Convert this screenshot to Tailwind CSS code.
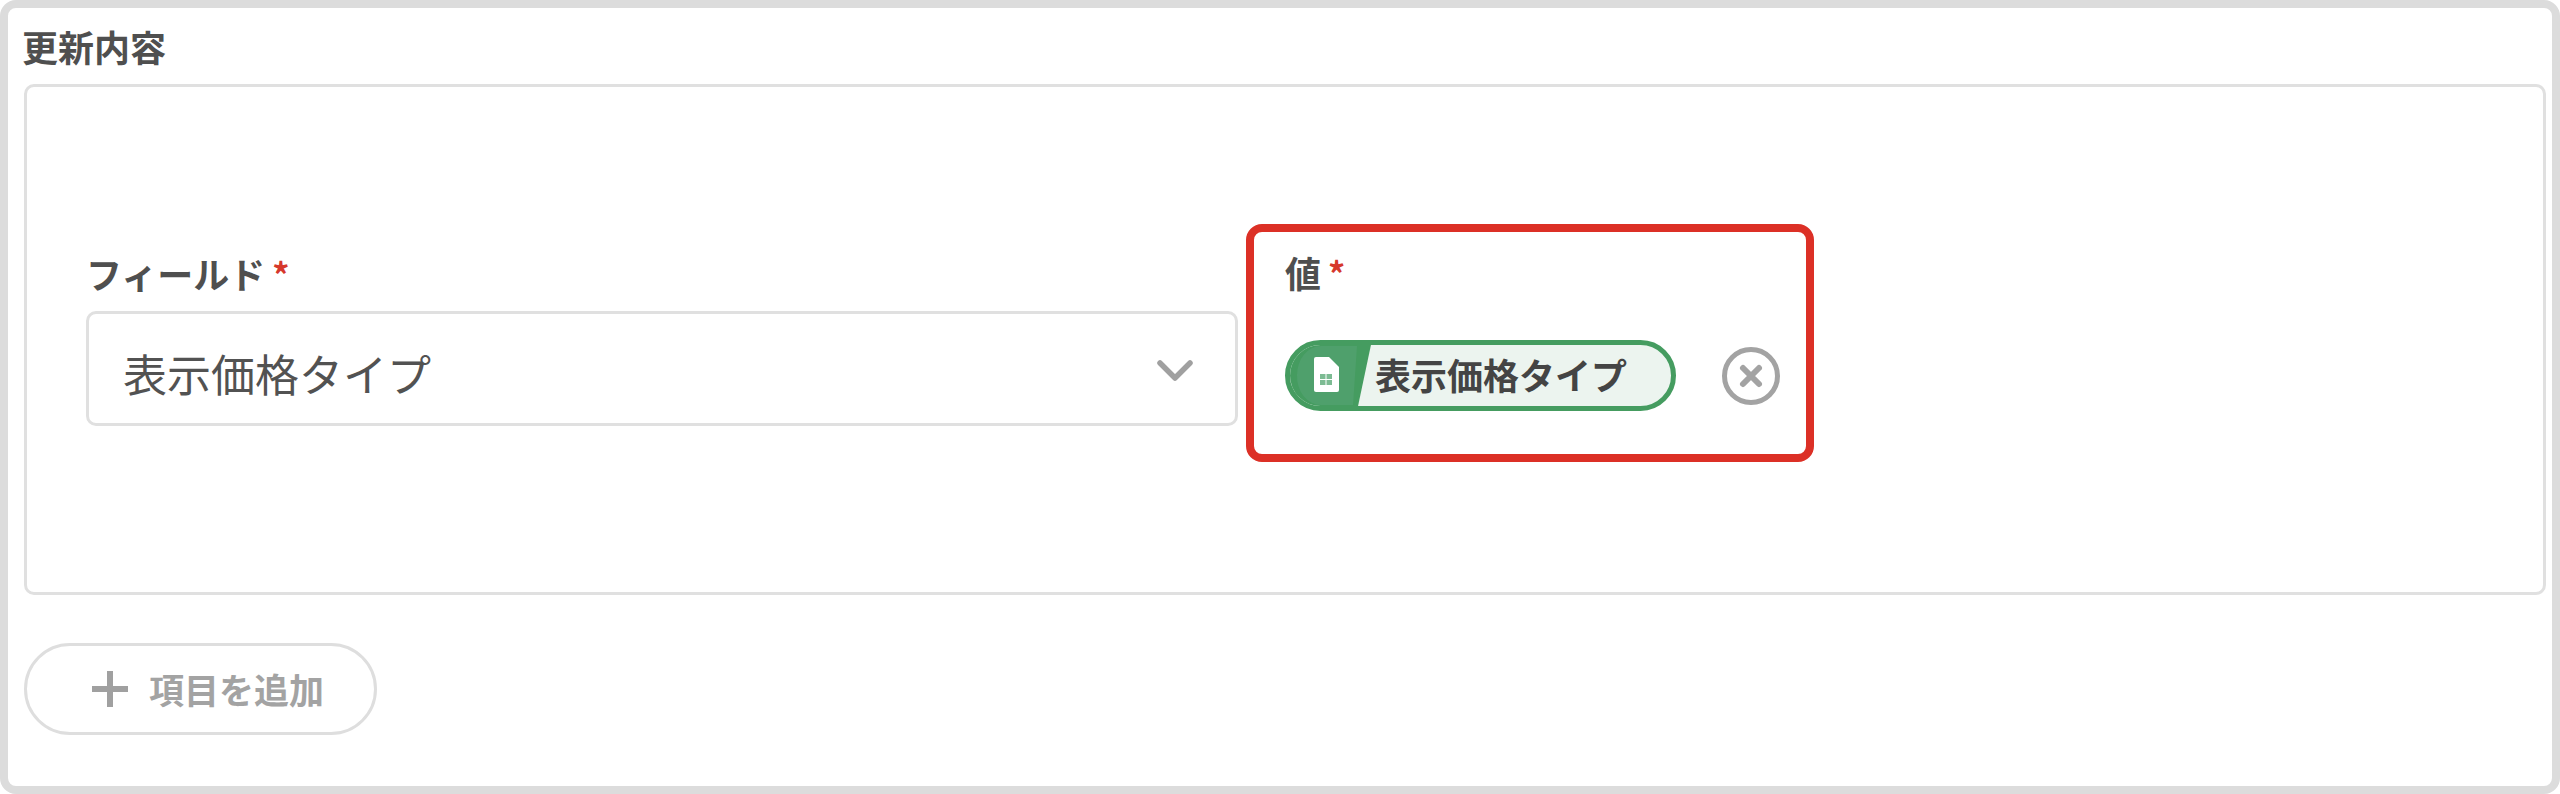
<!DOCTYPE html>
<html lang="ja">
<head>
    <meta charset="UTF-8">
    <title>更新内容</title>
    <script src="https://cdn.jsdelivr.net/npm/@tailwindcss/browser@4"></script>
</head>
<body class="bg-white font-['Noto_Sans_CJK_JP','Noto_Sans',sans-serif] text-[#4f4f4f]">
    <div class="box-border h-[794px] w-[2560px] rounded-[16px] border-8 border-[#dcdcdc] bg-white px-4 pt-[18px]">
        <!-- Title -->
        <h2 class="-ml-[2px] h-[58px] text-[36px] leading-[40px] font-bold">更新内容</h2>

        <!-- Update row -->
        <section class="box-border flex h-[511px] w-[2522px] items-start rounded-[10px] border-[3px] border-[#e0e0e0] pt-[137px] pl-[59px]">
            <div class="mt-[27px] w-[1152px]">
                <label class="flex h-[60px] items-start text-[36px] leading-[44px] font-bold">
                    フィールド<span class="mt-[3px] ml-[7px] text-[34px] leading-[40px] text-[#d6382c]">*</span>
                </label>
                <div class="box-border flex h-[115px] items-center justify-between rounded-[10px] border-[3px] border-[#e0e0e0] pr-[42px] pl-[34px] text-[44px] text-[#525252]">
                    <span class="mt-[8px]">表示価格タイプ</span>
                    <svg class="mt-[5px] h-[22px] w-[36px]" viewBox="0 0 36 22" fill="none" stroke="#a0a0a0" stroke-width="5.5" stroke-linecap="round" stroke-linejoin="round">
                        <path d="M3 3l15 15L33 3" />
                    </svg>
                </div>
            </div>

            <!-- Highlighted value -->
            <div class="relative ml-[8px] box-border h-[238px] w-[568px] rounded-[16px] border-8 border-[#dc3026] pl-[31px]">
                <label class="flex h-[108px] items-start pt-[18px] text-[36px] leading-[44px] font-bold">
                    値<span class="mt-[3px] ml-[7px] text-[34px] leading-[40px] text-[#d6382c]">*</span>
                </label>
                <div class="flex items-center">
                    <div class="box-border flex h-[71px] w-[391px] items-center overflow-hidden rounded-full border-[5px] border-[#459c60] bg-[#ecf4ef]">
                        <svg class="-ml-[5px] h-[71px] w-[92px] shrink-0" viewBox="0 0 92 71">
                            <path d="M0 0H87L72 71H0Z" fill="#459c60" />
                            <path d="M12 35A24 29 0 0 1 36 6H72L68 65H36A24 29 0 0 1 12 35Z" fill="#4fa06c" />
                            <path d="M29 19a2 2 0 0 1 2-2H44L54 27V50a2 2 0 0 1-2 2H31a2 2 0 0 1-2-2Z" fill="#ffffff" />
                            <path d="M35 34h12v11H35Z" fill="#7dbb93" />
                            <path d="M41 34v11M35 39.500h12" stroke="#ffffff" stroke-width="1" />
                        </svg>
                        <span class="-mt-[3px] -ml-[2px] text-[36px] leading-[44px] font-bold text-[#444444]">表示価格タイプ</span>
                    </div>
                    <svg class="ml-[45px] h-[60px] w-[60px]" viewBox="0 0 60 60" fill="none" stroke="#a3a3a3">
                        <circle cx="30" cy="30" r="26.500" stroke-width="5" />
                        <path d="M22 22l16 16M38 22L22 38" stroke-width="6" stroke-linecap="round" />
                    </svg>
                </div>
            </div>
        </section>

        <!-- Add item -->
        <button class="mt-[48px] box-border flex h-[92px] w-[353px] items-center rounded-full border-[3px] border-[#dedede] pl-[65px] text-[35px] font-bold text-[#a3a3a3]">
            <svg class="mr-[21px] h-[36px] w-[36px]" viewBox="0 0 36 36" fill="none" stroke="#a0a0a0" stroke-width="6">
                <path d="M18 0v36M0 18h36" />
            </svg>
            項目を追加
        </button>
    </div>
</body>
</html>
